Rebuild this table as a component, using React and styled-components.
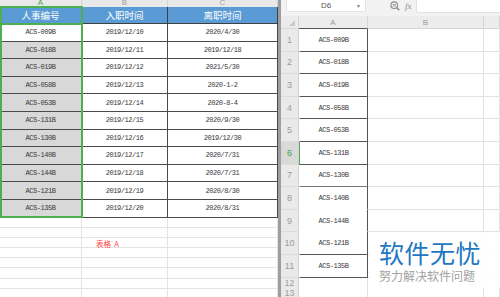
import React from 'react';
import styled, { createGlobalStyle } from 'styled-components';

const Global = createGlobalStyle`
  html, body { margin: 0; padding: 0; background: #fff; overflow: hidden; }
  #root { width: 500px; height: 297px; }
`;

const Screen = styled.div`
  position: relative;
  display: flex;
  width: 500px;
  height: 297px;
  overflow: hidden;
  background: #fff;
  font-family: "Liberation Sans", "Noto Sans CJK SC", sans-serif;
`;

/* ---------- left sheet ---------- */
const leftCols = '82px 86px 110px';

const LeftPane = styled.div`
  position: relative;
  width: 278px;
  flex: none;
  display: flex;
  flex-direction: column;
  overflow: hidden;
`;

const LColHeader = styled.div`
  display: grid;
  grid-template-columns: ${leftCols};
  height: 7px;
  flex: none;
  box-sizing: border-box;
  background: #e9e9e9;
  overflow: hidden;
`;

const LColLabel = styled.div`
  height: 7px;
  border-right: 1px solid #d4d4d4;
  overflow: hidden;
  text-align: center;
  font-size: 8px;
  line-height: 6px;
  color: ${p => (p.$active ? '#3fa63f' : '#a0a0a0')};
`;

const HeadRow = styled.div`
  display: grid;
  grid-template-columns: ${leftCols};
  height: 17px;
  flex: none;
  box-sizing: border-box;
  background: #5b9bd5;
  border-bottom: 1px solid #3f3f3f;
`;

const HeadCell = styled.div`
  display: flex;
  align-items: center;
  justify-content: center;
  border-right: 1px solid #3f3f3f;
  color: #fff;
  font-family: "Noto Sans CJK SC", sans-serif;
  font-size: 9.5px;
`;

const DataRow = styled.div`
  display: grid;
  grid-template-columns: ${leftCols};
  height: 17.6px;
  flex: none;
  box-sizing: border-box;
  border-bottom: 1px solid #4a4a4a;
`;

const DataCell = styled.div`
  display: flex;
  align-items: center;
  justify-content: center;
  background: ${p => (p.$shade ? '#d8d8d8' : '#fff')};
  border-right: 1px solid #4a4a4a;
  font-family: "Liberation Mono", monospace;
  font-size: 7px;
  letter-spacing: -0.45px;
  color: #3a3a3a;
`;

const BlankRow = styled.div`
  display: grid;
  grid-template-columns: ${leftCols};
  height: 10.2px;
  flex: none;
  box-sizing: border-box;
  border-bottom: 1px solid #e4e4e4;
`;

const BlankCell = styled.div`
  display: flex;
  align-items: center;
  justify-content: flex-start;
  padding-left: 14px;
  border-right: 1px solid #e4e4e4;
  white-space: pre;
  font-family: "Noto Sans CJK SC", sans-serif;
  font-size: 7.5px;
  color: #ff4444;
`;

const Selection = styled.div`
  position: absolute;
  left: 0;
  top: 6px;
  width: 83px;
  height: 212px;
  box-sizing: border-box;
  border: 2px solid #4caf50;
  pointer-events: none;
`;

const ActiveEdge = styled.div`
  position: absolute;
  left: 0;
  top: 23px;
  width: 83px;
  height: 2px;
  background: #4caf50;
`;

const Splitter = styled.div`
  width: 3px;
  flex: none;
  background: #9e9e9e;
`;

/* ---------- right sheet ---------- */
const rightCols = '18px 69px 116px 16px';

const RightPane = styled.div`
  flex: 1;
  display: flex;
  flex-direction: column;
  background: #f2f2f2;
  overflow: hidden;
`;

const Toolbar = styled.div`
  height: 16px;
  flex: none;
  display: flex;
  align-items: flex-start;
  padding-left: 5px;
  box-sizing: border-box;
`;

const NameBox = styled.div`
  width: 80px;
  height: 12px;
  display: grid;
  grid-template-columns: 1fr 8px;
  align-items: center;
  box-sizing: border-box;
  background: #fff;
  border: 1px solid #e2e2e2;
  border-top: none;
  border-radius: 0 0 2px 2px;
  font-size: 8px;
  color: #555;
`;

const NameText = styled.span`
  text-align: center;
  padding-left: 8px;
`;

const Caret = styled.span`
  font-size: 6px;
  color: #888;
`;

const IconSlot = styled.div`
  height: 12px;
  display: flex;
  align-items: center;
  margin-left: ${p => p.$gap}px;
  color: #8a8a8a;
`;

const Fx = styled.span`
  font-family: "Liberation Serif", serif;
  font-style: italic;
  font-size: 9px;
  color: #8a8a8a;
`;

const Formula = styled.div`
  flex: 1;
  height: 12px;
  margin-left: 4px;
  background: #fff;
  border-left: 1px solid #e2e2e2;
  border-bottom: 1px solid #e2e2e2;
  border-radius: 0 0 0 2px;
`;

const RColHeader = styled.div`
  display: grid;
  grid-template-columns: ${rightCols};
  height: 13px;
  flex: none;
  background: #ececec;
`;

const RColLabel = styled.div`
  display: flex;
  align-items: center;
  justify-content: center;
  box-sizing: border-box;
  border-right: 1px solid #d6d6d6;
  border-bottom: 1px solid ${p => (p.$dark ? '#555' : '#d6d6d6')};
  font-size: 8px;
  color: #9a9a9a;
`;

const Corner = styled.div`
  display: flex;
  align-items: flex-end;
  justify-content: flex-end;
  padding: 0 3px 2px 0;
  box-sizing: border-box;
  border-right: 1px solid #d6d6d6;
  border-bottom: 1px solid #d6d6d6;
`;

const RRow = styled.div`
  display: grid;
  grid-template-columns: ${rightCols};
  height: ${p => p.$h}px;
  flex: none;
`;

const RowNum = styled.div`
  display: flex;
  align-items: center;
  justify-content: center;
  box-sizing: border-box;
  background: ${p => (p.$active ? '#d9d9d9' : '#eaeaea')};
  border-right: 1px solid #d2d2d2;
  border-bottom: 1px solid #dcdcdc;
  font-size: ${p => (p.$small ? 8.5 : 9)}px;
  color: ${p => (p.$active ? '#3fa63f' : '#9c9c9c')};
`;

const RCellA = styled.div`
  display: flex;
  align-items: center;
  justify-content: center;
  box-sizing: border-box;
  background: #fff;
  border-left: 1px solid ${p => (p.$active ? '#4caf50' : '#fff')};
  border-right: 1px solid ${p => (p.$frame ? '#555' : '#e2e2e2')};
  border-bottom: 1px solid ${p => p.$line};
  font-family: "Liberation Mono", monospace;
  font-size: 7px;
  letter-spacing: -0.45px;
  color: #3a3a3a;
`;

const RCell = styled.div`
  box-sizing: border-box;
  background: #fff;
  border-right: 1px solid #e2e2e2;
  border-bottom: 1px solid #e2e2e2;
`;

/* ---------- watermark ---------- */
const Watermark = styled.div`
  position: absolute;
  left: 369px;
  top: 232px;
  width: 131px;
  height: 56px;
  box-sizing: border-box;
  padding: 6px 0 0 10px;
  display: flex;
  flex-direction: column;
  background: rgba(255, 255, 255, 0.93);
  font-family: "Noto Sans CJK SC", sans-serif;
`;

const WmTitle = styled.div`
  font-size: 25px;
  line-height: 28px;
  letter-spacing: 0.5px;
  color: #2177c2;
`;

const WmSub = styled.div`
  margin-top: 3px;
  font-size: 12px;
  line-height: 14px;
  color: #a2a2a2;
`;

const codes = ['ACS-009B', 'ACS-018B', 'ACS-019B', 'ACS-058B', 'ACS-053B', 'ACS-131B', 'ACS-130B', 'ACS-140B', 'ACS-144B', 'ACS-121B', 'ACS-135B'];
const hired = ['2019/12/10', '2019/12/11', '2019/12/12', '2019/12/13', '2019/12/14', '2019/12/15', '2019/12/16', '2019/12/17', '2019/12/18', '2019/12/19', '2019/12/20'];
const left = ['2020/4/30', '2019/12/18', '2021/5/30', '2020-1-2', '2020-8-4', '2020/9/30', '2019/12/30', '2020/7/31', '2020/7/31', '2020/8/30', '2020/8/31'];
const rightLines = ['#555', '#555', '#555', '#555', '#555', '#555', '#777', '#fff', '#fff', '#555', '#555'];

const Magnifier = () => (
  <svg width="10" height="10" viewBox="0 0 10 10" fill="none" stroke="currentColor">
    <circle cx="4.2" cy="4.2" r="3.3" strokeWidth="1.1" />
    <path d="M6.6 6.6 L9.3 9.3" strokeWidth="1.4" />
    <path d="M2.6 3.6 H5.8 M2.6 5 H5.8" strokeWidth="0.8" />
  </svg>
);

const CornerMark = () => (
  <svg width="6" height="6" viewBox="0 0 6 6">
    <path d="M6 0 V6 H0 Z" fill="#c9c9c9" />
  </svg>
);

export default function App() {
  return (
    <Screen>
      <Global />
      <LeftPane>
        <LColHeader>
          <LColLabel $active>A</LColLabel>
          <LColLabel>B</LColLabel>
          <LColLabel>C</LColLabel>
        </LColHeader>
        <HeadRow>
          <HeadCell>人事编号</HeadCell>
          <HeadCell>入职时间</HeadCell>
          <HeadCell>离职时间</HeadCell>
        </HeadRow>
        {codes.map((c, i) => (
          <DataRow key={c}>
            <DataCell $shade={i !== 0}>{c}</DataCell>
            <DataCell>{hired[i]}</DataCell>
            <DataCell>{left[i]}</DataCell>
          </DataRow>
        ))}
        {Array.from({ length: 8 }).map((_, i) => (
          <BlankRow key={i}>
            <BlankCell />
            <BlankCell>{i === 2 ? '表格  A' : ''}</BlankCell>
            <BlankCell />
          </BlankRow>
        ))}
        <Selection />
        <ActiveEdge />
      </LeftPane>
      <Splitter />
      <RightPane>
        <Toolbar>
          <NameBox>
            <NameText>D6</NameText>
            <Caret>▾</Caret>
          </NameBox>
          <IconSlot $gap={24}><Magnifier /></IconSlot>
          <IconSlot $gap={5}><Fx>fx</Fx></IconSlot>
          <Formula />
        </Toolbar>
        <RColHeader>
          <Corner><CornerMark /></Corner>
          <RColLabel $dark>A</RColLabel>
          <RColLabel>B</RColLabel>
          <RColLabel />
        </RColHeader>
        {codes.map((c, i) => (
          <RRow key={c} $h={22.6}>
            <RowNum $active={i === 5}>{i + 1}</RowNum>
            <RCellA $frame $active={i === 5} $line={rightLines[i]}>{c}</RCellA>
            <RCell />
            <RCell />
          </RRow>
        ))}
        {[12, 13].map(n => (
          <RRow key={n} $h={10.3}>
            <RowNum $small>{n}</RowNum>
            <RCellA $line="#e2e2e2" />
            <RCell />
            <RCell />
          </RRow>
        ))}
      </RightPane>
      <Watermark>
        <WmTitle>软件无忧</WmTitle>
        <WmSub>努力解决软件问题</WmSub>
      </Watermark>
    </Screen>
  );
}
